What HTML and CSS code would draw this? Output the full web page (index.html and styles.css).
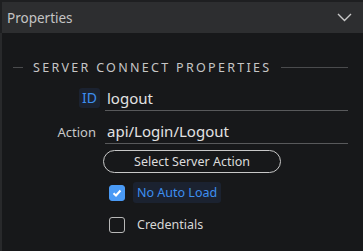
FILE: index.html
```html
<!DOCTYPE html>
<html lang="en">
<head>
    <meta charset="UTF-8">
    <title>Properties</title>
    <link rel="stylesheet" href="styles.css">
</head>
<body>
    <div class="panel">
        <header class="panel-header">
            <span class="panel-title">Properties</span>
            <svg class="chevron" width="15" height="9" viewBox="0 0 15 9">
                <path d="M1 1 L7.5 7.5 L14 1" fill="none" stroke="#c8c8c8" stroke-width="1.4"/>
            </svg>
        </header>
        <div class="panel-body">
            <div class="content">
                <div class="legend">
                    <span class="legend-line short"></span>
                    <span class="legend-text">SERVER CONNECT PROPERTIES</span>
                    <span class="legend-line"></span>
                </div>

                <div class="field">
                    <div class="field-label"><span class="label-tag active">ID</span></div>
                    <div class="field-input">logout</div>
                </div>

                <div class="field field-action">
                    <div class="field-label"><span class="label-tag">Action</span></div>
                    <div class="field-input">api/Login/Logout</div>
                </div>

                <div class="field-row">
                    <button class="pill-button">Select Server Action</button>
                </div>

                <div class="check-row first">
                    <span class="checkbox checked">
                        <svg width="10" height="8" viewBox="0 0 10 8">
                            <path d="M1.5 4.2 L4 6.5 L8.5 1.5" fill="none" stroke="#fff" stroke-width="2"/>
                        </svg>
                    </span>
                    <span class="check-label active">No Auto Load</span>
                </div>

                <div class="check-row">
                    <span class="checkbox"></span>
                    <span class="check-label">Credentials</span>
                </div>
            </div>
            <div class="scrollbar"></div>
        </div>
    </div>
</body>
</html>
```

FILE: styles.css
```css
html, body {
    margin: 0;
    padding: 0;
    height: 100%;
}
body {
    background-color: #1e1f21;
    font-family: "Noto Sans", "Open Sans", sans-serif;
    color: #d6d6d6;
    overflow: hidden;
}
.panel {
    display: flex;
    flex-direction: column;
    height: 100%;
    padding-top: 2px;
    box-sizing: border-box;
}
.panel-header {
    height: 31px;
    margin-left: 2px;
    background-color: #2d2e30;
    display: flex;
    align-items: center;
    justify-content: space-between;
    padding: 0 11px 0 5px;
}
.panel-title {
    font-size: 13.5px;
    color: #c4c4c4;
}
.chevron {
    display: block;
}
.panel-body {
    flex: 1;
    display: flex;
    border-left: 2px solid #28292b;
    background-color: #17181a;
}
.content {
    flex: 1;
    padding: 25px 20px 0 11px;
}
.scrollbar {
    width: 3px;
    margin-top: 1px;
    background-color: #3a3b3d;
}
.legend {
    display: flex;
    align-items: center;
    gap: 10px;
    height: 18px;
}
.legend-line {
    flex: 1;
    height: 1px;
    background-color: #4a4b4d;
}
.legend-line.short {
    flex: 0 0 10px;
}
.legend-text {
    font-size: 12.5px;
    letter-spacing: 2.3px;
    color: #c6c6c6;
}
.field {
    display: flex;
    margin-top: 12px;
}
.field-action {
    margin-top: 10px;
}
.field-label {
    width: 87px;
    display: flex;
    justify-content: flex-end;
    align-items: flex-start;
    padding-right: 5px;
}
.label-tag {
    height: 20px;
    line-height: 20px;
    padding: 0 3px;
    font-size: 13px;
    color: #c8c8c8;
    border-radius: 3px;
}
.label-tag.active {
    background-color: #1b2230;
    color: #3d8ff0;
    font-size: 14px;
}
.field-action .label-tag {
    height: 22px;
    line-height: 22px;
    padding-right: 4px;
}
.field-input {
    width: 241px;
    height: 22px;
    line-height: 20px;
    padding-left: 2px;
    font-size: 15px;
    color: #e2e2e2;
    border-bottom: 1px solid #58595b;
}
.field-row {
    margin-top: 6px;
    padding-left: 90px;
}
.pill-button {
    display: block;
    width: 178px;
    height: 23px;
    padding: 0;
    font-family: inherit;
    font-size: 12.5px;
    color: #dcdcdc;
    background-color: transparent;
    border: 1px solid #c8c8c8;
    border-radius: 12px;
}
.check-row {
    display: flex;
    align-items: center;
    gap: 8px;
    height: 21px;
    margin-top: 11px;
    padding-left: 96px;
}
.check-row.first {
    margin-top: 9px;
}
.checkbox {
    width: 14px;
    height: 14px;
    border: 1px solid #b8b8b8;
    border-radius: 3px;
    display: flex;
    align-items: center;
    justify-content: center;
}
.checkbox.checked {
    background-color: #4a9af5;
    border-color: #4a9af5;
}
.check-label {
    height: 21px;
    line-height: 21px;
    padding: 0 4px;
    font-size: 12.5px;
    color: #d6d6d6;
    border-radius: 3px;
}
.check-label.active {
    background-color: #1b2230;
    color: #3d8ff0;
}
```
